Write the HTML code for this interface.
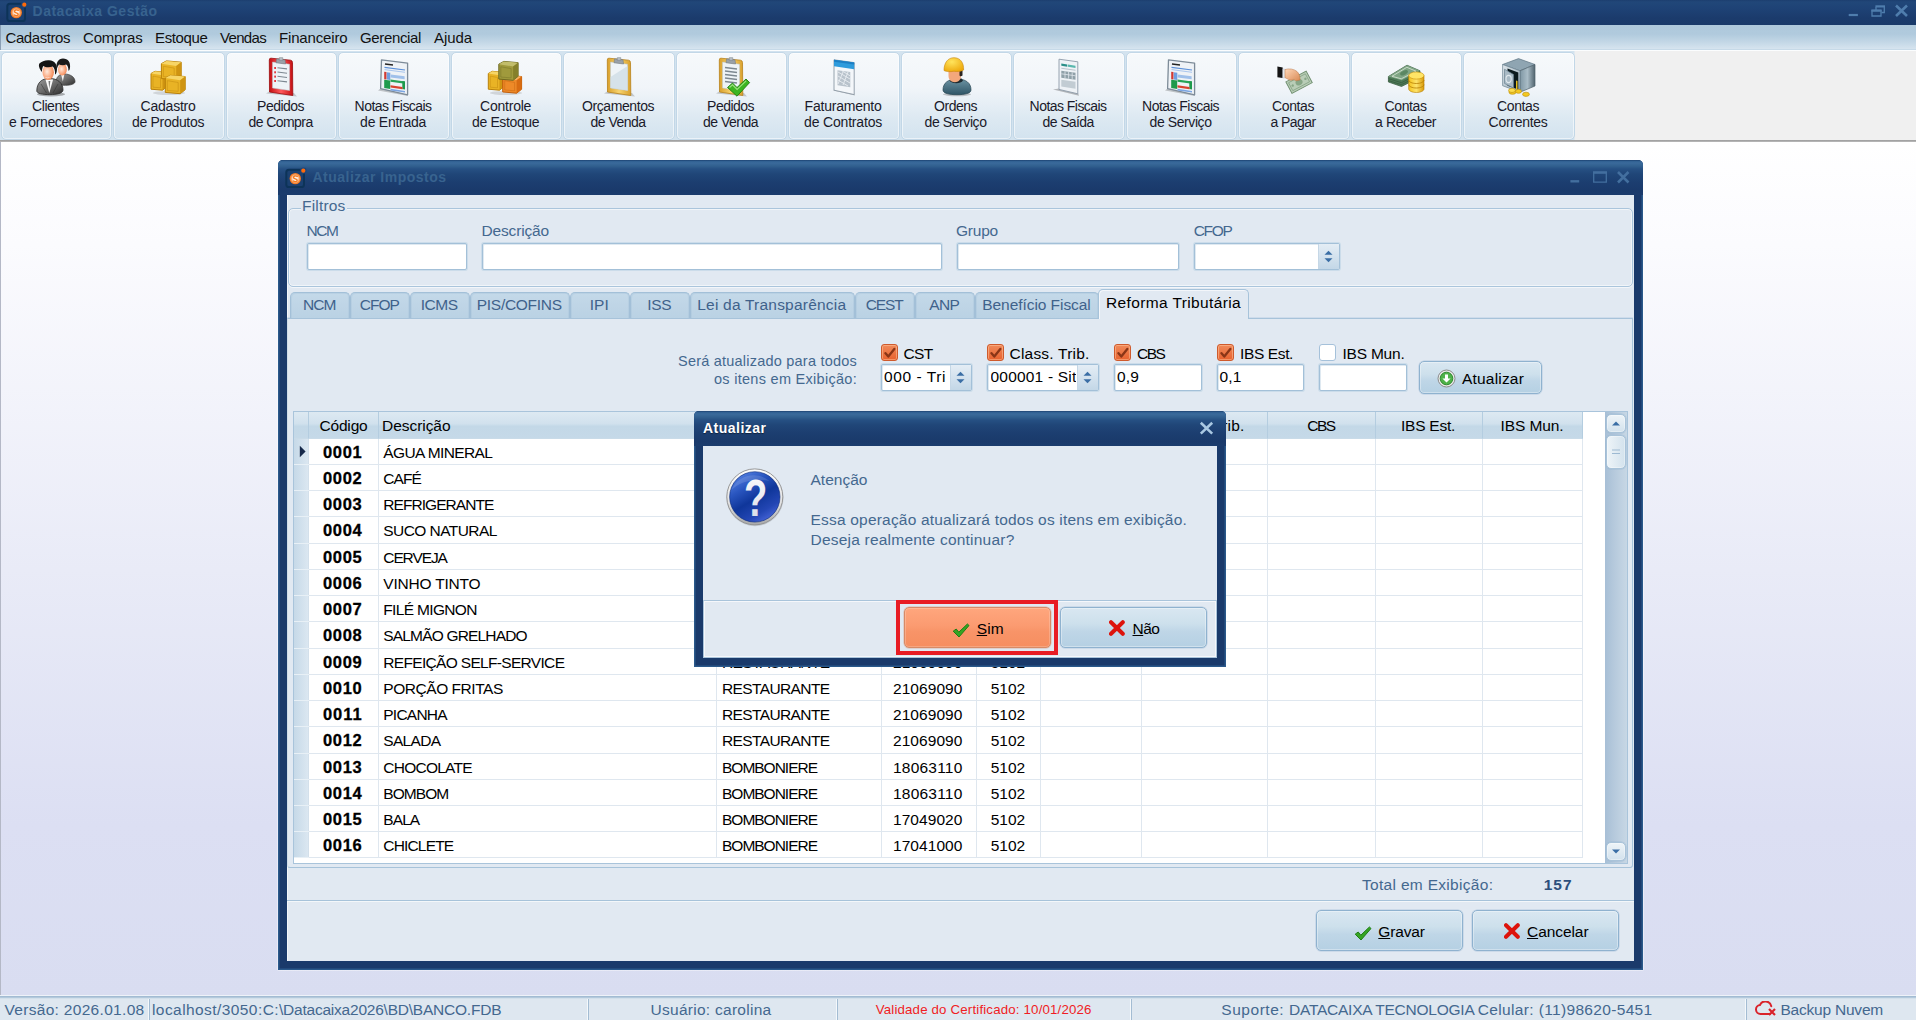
<!DOCTYPE html>
<html lang="pt-BR">
<head>
<meta charset="utf-8">
<title>Datacaixa Gestão - Atualizar Impostos</title>
<style>

*{box-sizing:border-box;margin:0;padding:0}
html,body{width:1916px;height:1020px;overflow:hidden}
body{position:relative;font-family:"Liberation Sans","DejaVu Sans",sans-serif;font-size:15px;color:#000;background:#fff}
div,span,svg,header,nav,main,section,footer,label,h1,h2,p{position:absolute}
h1,h2,p{font-weight:inherit;font-size:inherit}
.t{white-space:pre}
.w{left:0;top:0}
u{text-decoration:underline;text-underline-offset:1px}
#titlebar{left:0;top:0;width:1916px;height:25px;background:linear-gradient(#1c3e6f 0,#214779 2px,#1e4275 9px,#1b3b6c 18px,#1a3a6a 25px)}
#menubar{left:0;top:25px;width:1916px;height:25px;background:linear-gradient(#afc9dc 0,#b0cadd 9px,#c3d7e6 17px,#d5e3ee 23.5px,#c0d5e5 25px);border-left:1px solid #8a9fb5}
#toolbar{left:0;top:50px;width:1916px;height:90px;background:linear-gradient(90deg,#d3e3ef 0,#d3e3ef 1574px,#f0f0f0 1575px);border-top:1px solid #fbfdfe}
#tbline{left:0;top:140px;width:1916px;height:2px;background:linear-gradient(#9a9a9a,#bdbdbd)}
.tb{width:111.5px;height:88px;border:1px solid #c2d7e7;border-radius:5px;background:linear-gradient(#f6f9fb 0,#f1f5f9 40%,#dde9f2 75%,#d3e3ef 100%);box-shadow:inset 0 0 0 1px rgba(255,255,255,.55)}
#mdi{left:0;top:142px;width:1916px;height:854px;background:linear-gradient(#ffffff 0,#fbfbfe 12%,#e9ebf7 50%,#dcdff3 80%,#d9ddf1 100%);border-left:1px solid #b4b8c6}
#status{left:0;top:995px;width:1916px;height:25px;background:#dee7f0;border-top:1px solid #eef2f9;box-shadow:inset 0 1px 0 #a3bcd3,inset 0 2px 0 #b3c9dc,inset 0 3px 0 #d3e0eb}
.sep{width:2px;height:22px;border-left:1px solid #f4f8fb;border-right:1px solid #a3bcd3}
#win{width:1365px;height:810px;background:#1a3a6b;border-radius:5px 5px 1px 1px;box-shadow:inset 1.5px 0 0 #2a598b,inset -1.5px 0 0 #2a598b,inset 0 -1.5px 0 #2a598b,0 0 0 1px rgba(255,255,255,.4)}
#wintitle{left:0;top:0;width:1365px;height:35px;border-radius:5px 5px 0 0;background:linear-gradient(#173a68 0,#2f5f91 1px,#3a6a9b 3px,#31608f 6px,#265083 9px,#204678 14px,#1c3e70 22px,#1a3a6b 30px,#1b3c6d 35px)}
#winbody{left:9px;top:35px;width:1347px;height:766px;background:#e1e9f2;box-shadow:inset 1px 0 0 #f3f6fa}
.inp{background:#fff;border:1px solid #a3c0d8;border-radius:2px;box-shadow:0 0 0 1px rgba(186,209,228,.55),inset 1px 1px 0 rgba(163,192,216,.35)}
.grp{border:1px solid #aac5dc;border-radius:5px;box-shadow:inset 0 0 0 1px rgba(255,255,255,.55),0 1px 0 rgba(255,255,255,.6)}
.tab{height:26.5px;border:1px solid #a3c0d8;border-bottom:none;border-radius:5px 5px 0 0;background:linear-gradient(#c4d9e9 0,#bfd5e6 50%,#bad2e4 100%);box-shadow:inset 1px 1px 0 rgba(166,195,218,.35),inset -1px 0 0 rgba(166,195,218,.35)}
.tabsel{height:30px;border:1px solid #a7c3da;border-bottom:none;border-radius:5px 5px 0 0;background:#e1e9f2;box-shadow:inset 1px 1px 0 rgba(255,255,255,.6)}
.page{border:1px solid #a7c3da;border-left-color:#cfdde9;border-radius:0 0 3px 3px;box-shadow:0 -.5px 0 rgba(167,195,218,.6)}
.btn{border:1px solid #8fb2cf;border-radius:5px;background:linear-gradient(#d9e7f1 0,#cde0ec 40%,#bfd6e7 60%,#b5d0e3 100%);box-shadow:inset 0 0 0 1px rgba(255,255,255,.35),0 0 0 .5px rgba(143,178,207,.5)}
.btnhot{border:1px solid #d88a66;border-radius:5px;background:linear-gradient(#ffa67d 0,#fb9b71 45%,#f89468 60%,#f68e60 100%);box-shadow:inset 0 0 0 1px rgba(255,255,255,.2),0 0 0 .5px rgba(216,138,102,.5)}
.sbb{border-color:#a9c3d9;background:linear-gradient(#eef4f8,#d3e2ed)}
.sbt{border-color:#a9c3d9;background:linear-gradient(90deg,#eef4f8,#d3e2ed)}
.chk{width:17px;height:17px;border-radius:3px}
.chk.on{background:linear-gradient(#f08a5a,#e8622f);border:1px solid #cf5a2c;box-shadow:inset 0 0 0 1px rgba(255,200,160,.5)}
.chk.off{background:#fff;border:1px solid #a5c1da}
.spin{background:linear-gradient(#e4edf5,#c3d7e7);border-left:1px solid #c5d7e6}
#grid{width:1335px;height:453px;border:1px solid #a9c4db;background:#fff}
.gh{height:27px;background:linear-gradient(#dde9f2 0,#d1e1ed 45%,#c3d8e7 55%,#c5d9e8 100%);border-right:1px solid #b4cde0;border-bottom:1px solid #c9dbe8}
.ind{width:15px;height:419px;background:linear-gradient(90deg,#c6d9e8,#dbe7f1);border-right:1px solid #d3e0eb}
.hl{width:1274px;height:1px;background:#dfe7ef}
.hi{width:15px;height:1px;background:#e8f0f6}
.vl{width:1px;height:419px;background:#dfe7ef}
.sbtrack{width:22px;height:451px;background:linear-gradient(90deg,#a7bfd6 0,#b5c9dc 40%,#c7d7e5 100%)}
.rule{height:2px;border-top:1px solid #a7c3da;border-bottom:1px solid #f3f7fa}
#dlg{width:532px;height:256px;background:#1a3a6b;border-radius:5px 5px 1px 1px;box-shadow:inset 1.5px 0 0 #2a598b,inset -1.5px 0 0 #2a598b,inset 0 -1.5px 0 #2a598b}
#dlgtitle{left:0;top:0;width:532px;height:35px;border-radius:5px 5px 0 0;background:linear-gradient(#173a68 0,#2f5f91 1px,#3a6a9b 3px,#31608f 6px,#265083 9px,#204678 14px,#1c3e70 22px,#1a3a6b 30px,#1b3c6d 35px)}
#dlgbody{left:9px;top:35px;width:514px;height:212px;background:#e1e9f2}
#dlgfoot{border:1px solid #a9c4db;box-shadow:inset 0 0 0 1px rgba(255,255,255,.65);background:#e1e9f2}
#focus{border:4px solid #e81c24}

</style>
</head>
<body>
<header id="titlebar">
<svg style="left:5px;top:1px" width="24" height="23" viewBox="0 0 24 23"><defs><radialGradient id="ob1" cx="50%" cy="50%" r="50%"><stop offset="0" stop-color="#fff"/><stop offset=".45" stop-color="#fde3cf"/><stop offset=".8" stop-color="#f58a3c"/><stop offset="1" stop-color="#ef6d15"/></radialGradient></defs><rect x="2.3" y="2.8" width="17.7" height="17.2" rx="2.6" fill="#1b4070" stroke="#0d3358" stroke-width="2"/><circle cx="19.4" cy="3.6" r="3.2" fill="#1f4577"/><circle cx="11.3" cy="11.6" r="5.7" fill="url(#ob1)"/><path d="M13.3 9.4c-1.6-1-3.8-.4-3.8 1 0 1.700 3.7 1 3.7 2.8 0 1.400-2.3 1.900-3.9.8" fill="none" stroke="#f47b20" stroke-width="1.3" stroke-linecap="round"/><circle cx="19.3" cy="3.7" r="2.1" fill="#ff6a0a"/></svg>
<h1 class="t" style="left:32.50px;top:3px;line-height:16px;height:16px;font-size:14px;font-weight:700;color:#38638f;letter-spacing:0.517px;">Datacaixa Gestão</h1>
<svg style="left:1845px;top:3px" width="68" height="18" viewBox="0 0 68 18" fill="none" stroke="#4f7dad"><path d="M3.7 12h9.2" stroke-width="2.2"/><path d="M39.3 3v6.5h-2.8M31 4v3" stroke-width="1.3"/><path d="M30.4 3.4h9.6" stroke-width="2.2"/><path d="M27 7.5h9v5.5h-9z" stroke-width="1.3"/><path d="M26.4 7.6h10.2" stroke-width="2.2"/><path d="M51 2.5l11 10.5M62 2.5l-11 10.5" stroke-width="2.6"/></svg>
</header>
<nav id="menubar" aria-label="Menu principal">
<span class="t" role="menuitem" style="left:4.50px;top:4px;line-height:17px;height:17px;font-size:15px;color:#111;letter-spacing:-0.431px;">Cadastros</span>
<span class="t" role="menuitem" style="left:82.00px;top:4px;line-height:17px;height:17px;font-size:15px;color:#111;letter-spacing:-0.194px;">Compras</span>
<span class="t" role="menuitem" style="left:154.00px;top:4px;line-height:17px;height:17px;font-size:15px;color:#111;letter-spacing:-0.364px;">Estoque</span>
<span class="t" role="menuitem" style="left:219.00px;top:4px;line-height:17px;height:17px;font-size:15px;color:#111;letter-spacing:-0.674px;">Vendas</span>
<span class="t" role="menuitem" style="left:278.00px;top:4px;line-height:17px;height:17px;font-size:15px;color:#111;letter-spacing:-0.155px;">Financeiro</span>
<span class="t" role="menuitem" style="left:359.00px;top:4px;line-height:17px;height:17px;font-size:15px;color:#111;letter-spacing:-0.356px;">Gerencial</span>
<span class="t" role="menuitem" style="left:433.00px;top:4px;line-height:17px;height:17px;font-size:15px;color:#111;letter-spacing:-0.075px;">Ajuda</span>
</nav>
<div id="toolbar" role="toolbar">
<div class="tb" role="button" style="left:0.5px;top:0.5px;">
<svg style="left:34.7px;top:4.5px" width="40" height="40" viewBox="0 0 40 40"><defs><linearGradient id="su0" x1="0" y1="0" x2="1" y2="1"><stop offset="0" stop-color="#9a9a9a"/><stop offset=".5" stop-color="#6a6a6a"/><stop offset="1" stop-color="#2e2e2e"/></linearGradient>
<radialGradient id="sk0" cx="40%" cy="45%" r="70%"><stop offset="0" stop-color="#ffe9dc"/><stop offset=".6" stop-color="#f9a57c"/><stop offset="1" stop-color="#e8743f"/></radialGradient></defs>
<ellipse cx="15" cy="37.300" rx="14" ry="2.200" fill="#000" opacity=".3"/>
<path d="M20 26c0-6 3-9 8.500-9s10.500 3 10.500 7.500c0 2.600-4.500 3.800-9.500 3.800S20 27.800 20 26z" fill="url(#su0)" stroke="#3a3a3a" stroke-width=".7"/>
<path d="M25.300 18l1.500 6.500 1.400-6.500z" fill="#f4f4f4"/>
<ellipse cx="26.400" cy="12.600" rx="4.400" ry="6" fill="url(#sk0)"/>
<path d="M20.800 12c-1.400-6 1.600-10.600 6.200-10.600 5 0 8.200 4 6.800 10.600-.3 1-.8 1.600-1.400 1.800.2-2.800-.6-5-2.200-6.200-2.500 1-5.400.7-7.200-.2-1 1.300-1.600 2.800-2.200 4.600z" fill="#1a1a1a"/>
<path d="M.800 34c0-8 4.600-12.600 12.700-12.600S27 26 27 33c0 3.300-6 4.600-13.200 4.600S.800 36.500.800 34z" fill="url(#su0)" stroke="#2a2a2a" stroke-width=".8"/>
<path d="M9.500 22.600l3.800 13.400 3.800-13.400z" fill="#fafafa"/><path d="M12.500 24l.8 8 1-8z" fill="#777"/>
<path d="M5 27l5.500 9M22 27l-5 9" stroke="#2e2e2e" stroke-width=".8" opacity=".6"/>
<ellipse cx="12.200" cy="15.300" rx="5.700" ry="7.800" fill="url(#sk0)"/>
<path d="M8.500 19.500c1.600 1.600 5 1.600 6.600 0-1.200 2.200-5.400 2.200-6.600 0z" fill="#fff"/>
<path d="M5.800 15c-2.400-3-3.600-6.500-2.400-8.400C5.500 4.200 9 3 13 3.200c6 .3 9.400 5 7.600 11.800-.4 1.600-1 2.400-1.600 2.600.3-3.600-.5-6.600-2.400-8-3.200 1.200-7 .9-9.400-.5-.8 1.600-1.200 3.600-1.400 5.900z" fill="#141414"/></svg>
<span class="t" style="left:30.60px;top:45.5px;line-height:16px;height:16px;font-size:14px;color:#1a1a2a;letter-spacing:-0.449px;">Clientes</span>
<span class="t" style="left:7.60px;top:61.5px;line-height:16px;height:16px;font-size:14px;color:#1a1a2a;letter-spacing:-0.362px;">e Fornecedores</span>
</div>
<div class="tb" role="button" style="left:113px;top:0.5px;">
<svg style="left:34.7px;top:4.5px" width="40" height="40" viewBox="0 0 40 40"><ellipse cx="20" cy="36" rx="16" ry="2" fill="#000" opacity=".12"/><path d="M2 16.5L6 14.3L17.5 15.3L17.5 30.000000000000004L13.5 33.2L2 32.2Z" fill="#e9b325" stroke="#b98009" stroke-width="1" stroke-linejoin="round"/><path d="M2 16.5L6 14.3L17.5 15.3L13.5 18.3Z" fill="#f7d566"/><path d="M13.5 18.3L17.5 15.3L17.5 30.000000000000004L13.5 33.2Z" fill="#cf9412"/><path d="M4 19.1L11.5 20.5L11.5 30.800000000000004L4 30.200000000000003Z" fill="none" stroke="#b98009" stroke-opacity=".45" stroke-width=".9"/><path d="M12.4 6.65L17.4 3.9L32.2 5.15L32.2 18.8L27.200000000000003 22.8L12.4 21.55Z" fill="#e9b325" stroke="#b98009" stroke-width="1" stroke-linejoin="round"/><path d="M12.4 6.65L17.4 3.9L32.2 5.15L27.200000000000003 8.9Z" fill="#f7d566"/><path d="M27.200000000000003 8.9L32.2 5.15L32.2 18.8L27.200000000000003 22.8Z" fill="#cf9412"/><path d="M14.4 9.25L25.200000000000003 11.100000000000001L25.200000000000003 20.400000000000002L14.4 19.55Z" fill="none" stroke="#b98009" stroke-opacity=".45" stroke-width=".9"/><path d="M16.3 21.05L21.3 18.3L36.2 19.55L36.2 32.7L31.200000000000003 36.7L16.3 35.45Z" fill="#e9b325" stroke="#b98009" stroke-width="1" stroke-linejoin="round"/><path d="M16.3 21.05L21.3 18.3L36.2 19.55L31.200000000000003 23.3Z" fill="#f7d566"/><path d="M31.200000000000003 23.3L36.2 19.55L36.2 32.7L31.200000000000003 36.7Z" fill="#cf9412"/><path d="M18.3 23.650000000000002L29.200000000000003 25.5L29.200000000000003 34.300000000000004L18.3 33.45Z" fill="none" stroke="#b98009" stroke-opacity=".45" stroke-width=".9"/></svg>
<span class="t" style="left:26.60px;top:45.5px;line-height:16px;height:16px;font-size:14px;color:#1a1a2a;letter-spacing:-0.227px;">Cadastro</span>
<span class="t" style="left:18.10px;top:61.5px;line-height:16px;height:16px;font-size:14px;color:#1a1a2a;letter-spacing:-0.318px;">de Produtos</span>
</div>
<div class="tb" role="button" style="left:225.5px;top:0.5px;">
<svg style="left:34.7px;top:4.5px" width="40" height="40" viewBox="0 0 40 40"><path d="M5 36.500L36 39.500 33 36 9 34z" fill="#000" opacity=".18"/><defs><linearGradient id="cbred2" x1="0" y1="0" x2="1" y2="0"><stop offset="0" stop-color="#c40f12"/><stop offset=".5" stop-color="#ff5a5c"/><stop offset="1" stop-color="#c40f12"/></linearGradient></defs><path d="M10 1.200L29.500 3.200q2 .3 2 2.300L31.800 38.500 8.500 35 8.300 3q0-2 1.700-1.800z" fill="url(#cbred2)" stroke="#9c0a0c" stroke-width=".8"/><path d="M11.500 5L28.600 7.200 28.600 33.500 11.500 31z" fill="#eef3f7" stroke="#b9c4cc" stroke-width=".5"/><path d="M15.500 1.800l8.500 1 .6 4.200-9.600-1.200z" fill="#9aa1a8" stroke="#6d747b" stroke-width=".5"/><path d="M18.300 .6h3.500v2.800h-3.500z" fill="#b8bec4" stroke="#6d747b" stroke-width=".4"/><rect x="13.300" y="10" width="1.600" height="2" fill="#e0242a"/><path d="M16.500 10.7l9.500 1.200" stroke="#7c8790" stroke-width="1.100"/><rect x="13.300" y="14.3" width="1.600" height="2" fill="#e0242a"/><path d="M16.500 15.0l9.500 1.200" stroke="#7c8790" stroke-width="1.100"/><rect x="13.300" y="18.6" width="1.600" height="2" fill="#e0242a"/><path d="M16.500 19.3l9.500 1.200" stroke="#7c8790" stroke-width="1.100"/><rect x="13.300" y="23" width="1.600" height="2" fill="#e0242a"/><path d="M16.500 23.7l9.500 1.200" stroke="#7c8790" stroke-width="1.100"/></svg>
<span class="t" style="left:30.60px;top:45.5px;line-height:16px;height:16px;font-size:14px;color:#1a1a2a;letter-spacing:-0.513px;">Pedidos</span>
<span class="t" style="left:22.10px;top:61.5px;line-height:16px;height:16px;font-size:14px;color:#1a1a2a;letter-spacing:-0.585px;">de Compra</span>
</div>
<div class="tb" role="button" style="left:338px;top:0.5px;">
<svg style="left:34.7px;top:4.5px" width="40" height="40" viewBox="0 0 40 40"><path d="M4 33.500L34 39 33 36 7 31z" fill="#000" opacity=".2"/>
<path d="M7.500 2.800L33.600 6.200 33.600 37.800 6.600 31.600z" fill="#eef2f6" stroke="#7d8b98" stroke-width="1.300" stroke-linejoin="round"/>
<path d="M11 7l8 1" stroke="#222" stroke-width="1.300"/>
<path d="M10.500 10.300l20.500 2.700" stroke="#5b8fd8" stroke-width="1.200"/><path d="M10.500 12.600l20.500 2.700" stroke="#a9c6ee" stroke-width="1"/>
<path d="M10.200 14.800l2.300.3v7.500l-2.300-.3z" fill="#d23a32"/>
<path d="M12.800 15.200l3.500.5v7.300l-3.500-.5z" fill="#6e9ee0"/>
<path d="M16.600 17.500l14 1.800v3l-14-1.800z" fill="#9fc0ea"/>
<path d="M10.200 22.800l6 .8v8.300l-6-1z" fill="#1f9a4c"/>
<path d="M16.500 22.500l14.500 2v2.200l-14.500-2z" fill="#27a356"/><path d="M28.300 24l2.700.4v8l-2.700-.4z" fill="#1f9a4c"/>
<path d="M16.500 28.300l12 1.700v2.300l-12-1.700z" fill="#d8432f"/>
<path d="M16.500 31.800l14.500 2.200v1.600l-14.500-2.200z" fill="#7ba5e2"/></svg>
<span class="t" style="left:15.60px;top:45.5px;line-height:16px;height:16px;font-size:14px;color:#1a1a2a;letter-spacing:-0.541px;">Notas Fiscais</span>
<span class="t" style="left:21.10px;top:61.5px;line-height:16px;height:16px;font-size:14px;color:#1a1a2a;letter-spacing:-0.250px;">de Entrada</span>
</div>
<div class="tb" role="button" style="left:450.5px;top:0.5px;">
<svg style="left:34.7px;top:4.5px" width="40" height="40" viewBox="0 0 40 40"><ellipse cx="20" cy="36" rx="16" ry="2" fill="#000" opacity=".12"/><path d="M2.3 16.5L6.3 14.3L17.5 15.3L17.5 30.000000000000004L13.5 33.2L2.3 32.2Z" fill="#e9b325" stroke="#b98009" stroke-width="1" stroke-linejoin="round"/><path d="M2.3 16.5L6.3 14.3L17.5 15.3L13.5 18.3Z" fill="#f7d566"/><path d="M13.5 18.3L17.5 15.3L17.5 30.000000000000004L13.5 33.2Z" fill="#cf9412"/><path d="M4.3 19.1L11.5 20.5L11.5 30.800000000000004L4.3 30.200000000000003Z" fill="none" stroke="#b98009" stroke-opacity=".45" stroke-width=".9"/><path d="M16.7 21.05L21.7 18.3L35.6 19.55L35.6 32.2L30.6 36.2L16.7 34.95Z" fill="#ee8a28" stroke="#c05e0c" stroke-width="1" stroke-linejoin="round"/><path d="M16.7 21.05L21.7 18.3L35.6 19.55L30.6 23.3Z" fill="#f8b060"/><path d="M30.6 23.3L35.6 19.55L35.6 32.2L30.6 36.2Z" fill="#d86c12"/><path d="M18.7 23.650000000000002L28.6 25.5L28.6 33.800000000000004L18.7 32.95Z" fill="none" stroke="#c05e0c" stroke-opacity=".45" stroke-width=".9"/><path d="M12.8 7.15L17.8 4.4L32.1 5.65L32.1 19.3L27.1 23.3L12.8 22.05Z" fill="#a09a3c" stroke="#6e6a22" stroke-width="1" stroke-linejoin="round"/><path d="M12.8 7.15L17.8 4.4L32.1 5.65L27.1 9.4Z" fill="#c2bd6a"/><path d="M27.1 9.4L32.1 5.65L32.1 19.3L27.1 23.3Z" fill="#85802a"/><path d="M14.8 9.75L25.1 11.600000000000001L25.1 20.900000000000002L14.8 20.05Z" fill="none" stroke="#6e6a22" stroke-opacity=".45" stroke-width=".9"/></svg>
<span class="t" style="left:28.60px;top:45.5px;line-height:16px;height:16px;font-size:14px;color:#1a1a2a;letter-spacing:-0.240px;">Controle</span>
<span class="t" style="left:20.60px;top:61.5px;line-height:16px;height:16px;font-size:14px;color:#1a1a2a;letter-spacing:-0.384px;">de Estoque</span>
</div>
<div class="tb" role="button" style="left:563px;top:0.5px;">
<svg style="left:34.7px;top:4.5px" width="40" height="40" viewBox="0 0 40 40"><path d="M5 36.500L36 39.500 33 36 9 34z" fill="#000" opacity=".18"/><defs><linearGradient id="cbtan5" x1="0" y1="0" x2="1" y2="0"><stop offset="0" stop-color="#d9a02c"/><stop offset=".5" stop-color="#f7d36f"/><stop offset="1" stop-color="#d9a02c"/></linearGradient></defs><path d="M10 1.200L29.500 3.200q2 .3 2 2.300L31.800 38.500 8.500 35 8.300 3q0-2 1.700-1.800z" fill="url(#cbtan5)" stroke="#b8821a" stroke-width=".8"/><path d="M11.500 5L28.600 7.200 28.600 33.500 11.500 31z" fill="#eef3f7" stroke="#b9c4cc" stroke-width=".5"/><path d="M15.500 1.800l8.500 1 .6 4.200-9.600-1.200z" fill="#9aa1a8" stroke="#6d747b" stroke-width=".5"/><path d="M18.300 .6h3.500v2.800h-3.500z" fill="#b8bec4" stroke="#6d747b" stroke-width=".4"/><path d="M11.500 20L28.600 9v24.500L11.500 31z" fill="#cfdde6" opacity=".8"/></svg>
<span class="t" style="left:18.10px;top:45.5px;line-height:16px;height:16px;font-size:14px;color:#1a1a2a;letter-spacing:-0.425px;">Orçamentos</span>
<span class="t" style="left:26.60px;top:61.5px;line-height:16px;height:16px;font-size:14px;color:#1a1a2a;letter-spacing:-0.521px;">de Venda</span>
</div>
<div class="tb" role="button" style="left:675.5px;top:0.5px;">
<svg style="left:34.7px;top:4.5px" width="40" height="40" viewBox="0 0 40 40"><path d="M5 36.500L36 39.500 33 36 9 34z" fill="#000" opacity=".18"/><defs><linearGradient id="cbtan26" x1="0" y1="0" x2="1" y2="0"><stop offset="0" stop-color="#d9a02c"/><stop offset=".5" stop-color="#f7d36f"/><stop offset="1" stop-color="#d9a02c"/></linearGradient></defs><path d="M10 1.200L29.500 3.200q2 .3 2 2.300L31.800 38.500 8.500 35 8.300 3q0-2 1.700-1.800z" fill="url(#cbtan26)" stroke="#b8821a" stroke-width=".8"/><path d="M11.500 5L28.600 7.200 28.600 33.500 11.500 31z" fill="#eef3f7" stroke="#b9c4cc" stroke-width=".5"/><path d="M15.500 1.800l8.500 1 .6 4.200-9.600-1.200z" fill="#9aa1a8" stroke="#6d747b" stroke-width=".5"/><path d="M18.300 .6h3.500v2.800h-3.500z" fill="#b8bec4" stroke="#6d747b" stroke-width=".4"/><path d="M14 10.5l12 1.500" stroke="#7c8790" stroke-width="1.300"/><path d="M14 14l12 1.500" stroke="#7c8790" stroke-width="1.300"/><path d="M14 17.5l12 1.500" stroke="#7c8790" stroke-width="1.300"/><path d="M14 21l12 1.500" stroke="#7c8790" stroke-width="1.300"/><path d="M14 24.5l12 1.500" stroke="#7c8790" stroke-width="1.300"/><path d="M16.500 30.500l5-4.500 4.500 4.500L35 22l3.600 3.600L26 39.200z" fill="#3cb521" stroke="#1f7d10" stroke-width=".9" stroke-linejoin="round"/><path d="M18.500 30.500l3-2.600 4.600 4.600 9-8.600" fill="none" stroke="#9be07e" stroke-width="1.200"/></svg>
<span class="t" style="left:30.60px;top:45.5px;line-height:16px;height:16px;font-size:14px;color:#1a1a2a;letter-spacing:-0.513px;">Pedidos</span>
<span class="t" style="left:26.60px;top:61.5px;line-height:16px;height:16px;font-size:14px;color:#1a1a2a;letter-spacing:-0.521px;">de Venda</span>
</div>
<div class="tb" role="button" style="left:788px;top:0.5px;">
<svg style="left:34.7px;top:4.5px" width="40" height="40" viewBox="0 0 40 40"><path d="M9 33.500L31 38.500 30 36 11 32z" fill="#000" opacity=".22"/>
<path d="M10 2.800L30.200 5.600 30.200 37.600 10 33.200z" fill="#f4f7fa" stroke="#8b98a5" stroke-width=".9" stroke-linejoin="round"/>
<path d="M10 2.800L30.200 5.600 30.200 12.300 10 9.200z" fill="#2e9bdc"/><path d="M10 2.800L30.200 5.600 30.200 7.600 10 4.800z" fill="#1d7fc4"/>
<path d="M13.500 13.200l12.800 1.800v15.200l-12.800-2z" fill="#b9c3cc"/>
<path d="M14 15l12 7M14 19l12 7M14 23l10 6M18 13.800l8 5M14 27l5-12M19 28l5-13" stroke="#f4f7fa" stroke-width=".9" opacity=".8"/></svg>
<span class="t" style="left:15.60px;top:45.5px;line-height:16px;height:16px;font-size:14px;color:#1a1a2a;letter-spacing:-0.216px;">Faturamento</span>
<span class="t" style="left:15.10px;top:61.5px;line-height:16px;height:16px;font-size:14px;color:#1a1a2a;letter-spacing:-0.181px;">de Contratos</span>
</div>
<div class="tb" role="button" style="left:900.5px;top:0.5px;">
<svg style="left:34.7px;top:4.5px" width="40" height="40" viewBox="0 0 40 40"><defs><radialGradient id="hh8" cx="40%" cy="30%" r="75%"><stop offset="0" stop-color="#ffe45c"/><stop offset="1" stop-color="#eda80c"/></radialGradient>
<linearGradient id="wb8" x1="0" y1="0" x2="0" y2="1"><stop offset="0" stop-color="#6d94a4"/><stop offset="1" stop-color="#2f5566"/></linearGradient></defs>
<ellipse cx="21" cy="37.300" rx="14" ry="2" fill="#000" opacity=".2"/>
<path d="M7 33c0-7 5-11 14-11s14 4 14 11c0 3.300-6 4.700-14 4.700S7 36.300 7 33z" fill="url(#wb8)" stroke="#264552" stroke-width=".7"/>
<path d="M13.500 23.500c2 3.500 11.500 3.500 13.500 0l-1.500-2h-10z" fill="#1f2a30"/>
<path d="M12.500 13h12.500v6c0 3.500-2.700 6.200-6.200 6.200s-6.300-2.700-6.300-6.200z" fill="#f3a77c"/>
<path d="M23.500 13.500h3v5c-1 .8-2 1.400-3 0z" fill="#2a2420"/>
<path d="M8 13.500c0-8 4-12.800 10-12.800 6.300 0 10 5 9.600 12.300-3 1.700-7 1.700-9.600 1.200-4 .8-7.600.6-10-.7z" fill="url(#hh8)" stroke="#c8860a" stroke-width=".6"/></svg>
<span class="t" style="left:32.60px;top:45.5px;line-height:16px;height:16px;font-size:14px;color:#1a1a2a;letter-spacing:-0.487px;">Ordens</span>
<span class="t" style="left:23.10px;top:61.5px;line-height:16px;height:16px;font-size:14px;color:#1a1a2a;letter-spacing:-0.416px;">de Serviço</span>
</div>
<div class="tb" role="button" style="left:1013px;top:0.5px;">
<svg style="left:34.7px;top:4.5px" width="40" height="40" viewBox="0 0 40 40"><path d="M4 32.500L30 38.800 29 36 10 31.500z" fill="#000" opacity=".25"/>
<path d="M10 2.200L28.800 4.800 28.800 36.800 10 32.400z" fill="#eef2f6" stroke="#8c9aa8" stroke-width=".9" stroke-linejoin="round"/>
<path d="M12.300 6.600l6 .9v2.200l-6-.9z" fill="#2a8f88"/><path d="M19 7.600l7.500 1.100v2.200L19 9.800z" fill="#59b7ad"/>
<path d="M12.300 10.800l14.200 2v1l-14.200-2z" fill="#b9c3cc"/>
<path d="M12.300 13.800l14.200 2v7l-14.200-2z" fill="#8fa0a8"/><path d="M12.300 16.800l14.200 2" stroke="#dfe6ec" stroke-width=".8"/><path d="M16 14.400v6.800M19.600 14.900v6.800M23.200 15.400v6.800" stroke="#dfe6ec" stroke-width=".8"/>
<path d="M12.300 22.800l14.200 2v7l-14.200-2.400z" fill="#c2ccd3"/></svg>
<span class="t" style="left:15.60px;top:45.5px;line-height:16px;height:16px;font-size:14px;color:#1a1a2a;letter-spacing:-0.541px;">Notas Fiscais</span>
<span class="t" style="left:28.60px;top:61.5px;line-height:16px;height:16px;font-size:14px;color:#1a1a2a;letter-spacing:-0.633px;">de Saída</span>
</div>
<div class="tb" role="button" style="left:1125.5px;top:0.5px;">
<svg style="left:34.7px;top:4.5px" width="40" height="40" viewBox="0 0 40 40"><path d="M4 33.500L34 39 33 36 7 31z" fill="#000" opacity=".2"/>
<path d="M7.500 2.800L33.600 6.200 33.600 37.800 6.600 31.600z" fill="#eef2f6" stroke="#7d8b98" stroke-width="1.300" stroke-linejoin="round"/>
<path d="M11 7l8 1" stroke="#222" stroke-width="1.300"/>
<path d="M10.500 10.300l20.500 2.700" stroke="#5b8fd8" stroke-width="1.200"/><path d="M10.500 12.600l20.500 2.700" stroke="#a9c6ee" stroke-width="1"/>
<path d="M10.200 14.800l2.300.3v7.500l-2.300-.3z" fill="#d23a32"/>
<path d="M12.800 15.200l3.500.5v7.300l-3.500-.5z" fill="#6e9ee0"/>
<path d="M16.600 17.500l14 1.800v3l-14-1.800z" fill="#9fc0ea"/>
<path d="M10.200 22.800l6 .8v8.300l-6-1z" fill="#1f9a4c"/>
<path d="M16.500 22.500l14.500 2v2.200l-14.500-2z" fill="#27a356"/><path d="M28.300 24l2.700.4v8l-2.700-.4z" fill="#1f9a4c"/>
<path d="M16.500 28.300l12 1.700v2.300l-12-1.700z" fill="#d8432f"/>
<path d="M16.500 31.800l14.500 2.200v1.600l-14.500-2.200z" fill="#7ba5e2"/></svg>
<span class="t" style="left:15.60px;top:45.5px;line-height:16px;height:16px;font-size:14px;color:#1a1a2a;letter-spacing:-0.541px;">Notas Fiscais</span>
<span class="t" style="left:23.10px;top:61.5px;line-height:16px;height:16px;font-size:14px;color:#1a1a2a;letter-spacing:-0.416px;">de Serviço</span>
</div>
<div class="tb" role="button" style="left:1238px;top:0.5px;">
<svg style="left:34.7px;top:4.5px" width="40" height="40" viewBox="0 0 40 40"><defs><linearGradient id="hd11" x1="0" y1="0" x2="1" y2="1"><stop offset="0" stop-color="#ffd7b8"/><stop offset="1" stop-color="#d98a55"/></linearGradient></defs>
<g transform="rotate(-28 25.500 25)"><rect x="13.500" y="18.500" width="23" height="13" fill="#b9cdb7" stroke="#6f8f6f" stroke-width=".9"/><rect x="15.500" y="20.500" width="19" height="9" fill="none" stroke="#7f9f7f" stroke-width=".7"/><ellipse cx="25" cy="25" rx="3.600" ry="3" fill="#87a686"/><circle cx="17.800" cy="25" r="1.200" fill="#87a686"/><circle cx="32.200" cy="25" r="1.200" fill="#87a686"/></g>
<path d="M3.400 9.400l5.300 1v10.600l-5.300-.8z" fill="#141414"/><path d="M8.700 11.800l2.400.6v8.400l-2.400.2z" fill="#e9edf2" stroke="#99a" stroke-width=".3"/>
<path d="M11 12.500c4-1.200 9-.6 12 2 2 1.800 3.300 5 3 8.500l-2.500.6c-1.600.3-2.800-.2-3.600-1-2.400 1-5 .6-6.600-.8L11 20.600z" fill="url(#hd11)" stroke="#b8703f" stroke-width=".5"/></svg>
<span class="t" style="left:33.10px;top:45.5px;line-height:16px;height:16px;font-size:14px;color:#1a1a2a;letter-spacing:-0.393px;">Contas</span>
<span class="t" style="left:31.60px;top:61.5px;line-height:16px;height:16px;font-size:14px;color:#1a1a2a;letter-spacing:-0.578px;">a Pagar</span>
</div>
<div class="tb" role="button" style="left:1350.5px;top:0.5px;">
<svg style="left:34.7px;top:4.5px" width="40" height="40" viewBox="0 0 40 40"><defs><linearGradient id="cn12" x1="0" y1="0" x2="1" y2="0"><stop offset="0" stop-color="#f6c31c"/><stop offset=".5" stop-color="#fde36a"/><stop offset="1" stop-color="#d99a08"/></linearGradient></defs>
<path d="M2.400 19.500L21 8.200l13 5.600v6.500L15.500 29.500 2.400 25z" fill="#4d7a57" stroke="#35583c" stroke-width=".7" stroke-linejoin="round"/>
<path d="M2.400 19.500L21 8.200l13 5.600L15.500 23.200z" fill="#7fa584"/><path d="M6 19.300L20.800 10.300l9.200 3.900-14.700 7.600z" fill="none" stroke="#d8e6d6" stroke-width=".8"/><ellipse cx="18" cy="15.800" rx="4.200" ry="2.100" transform="rotate(-25 18 15.800)" fill="#5b8763"/>
<path d="M2.400 21.700l13.100 4 18.500-9.500M2.400 23.600l13.100 4L34 18.300" stroke="#2f5036" stroke-width=".6" fill="none"/>
<g><path d="M22.700 18.500h15.300v13.500c0 1.900-3.400 3.500-7.650 3.500s-7.650-1.600-7.650-3.500z" fill="url(#cn12)" stroke="#b57d05" stroke-width=".6"/>
<ellipse cx="30.350" cy="18.500" rx="7.650" ry="3.600" fill="#ffe566" stroke="#c98f08" stroke-width=".6"/>
<path d="M22.700 23c0 1.900 3.400 3.500 7.650 3.500s7.650-1.600 7.650-3.500M22.700 27.500c0 1.900 3.400 3.500 7.650 3.500s7.650-1.600 7.650-3.500" fill="none" stroke="#b57d05" stroke-width=".8"/></g></svg>
<span class="t" style="left:33.10px;top:45.5px;line-height:16px;height:16px;font-size:14px;color:#1a1a2a;letter-spacing:-0.393px;">Contas</span>
<span class="t" style="left:23.60px;top:61.5px;line-height:16px;height:16px;font-size:14px;color:#1a1a2a;letter-spacing:-0.399px;">a Receber</span>
</div>
<div class="tb" role="button" style="left:1463px;top:0.5px;">
<svg style="left:34.7px;top:4.5px" width="40" height="40" viewBox="0 0 40 40"><defs><linearGradient id="sf113" x1="0" y1="0" x2="1" y2="0"><stop offset="0" stop-color="#7f97a4"/><stop offset=".5" stop-color="#a9bcc6"/><stop offset="1" stop-color="#50636e"/></linearGradient>
<linearGradient id="sf213" x1="0" y1="0" x2="1" y2="1"><stop offset="0" stop-color="#dfe7ec"/><stop offset="1" stop-color="#93a7b3"/></linearGradient></defs>
<path d="M3.600 7.500L19.500 1.600 36 7.500 21 13.800z" fill="#8fa5b2" stroke="#5f7684" stroke-width=".7" stroke-linejoin="round"/>
<path d="M21 13.800L36 7.500v21.500L21 35.200z" fill="url(#sf113)" stroke="#51646f" stroke-width=".7" stroke-linejoin="round"/>
<path d="M3.600 7.500L21 13.800v21.400L3.600 28.700z" fill="url(#sf213)" stroke="#6b8291" stroke-width=".7" stroke-linejoin="round"/>
<path d="M8.500 11.500L19.300 15.500v17L8.500 28.700z" fill="#0c1a1e"/>
<path d="M5.500 12.200l9 5.300v13.500l-9-4.600z" fill="#a9bac5" stroke="#6b8291" stroke-width=".7"/>
<ellipse cx="9.600" cy="22" rx="2.600" ry="3.600" fill="none" stroke="#dfe7ec" stroke-width="1.100"/>
<path d="M17 23.500l1.500.5v8.500l-1.500-.5z" fill="#e9c01c"/>
<ellipse cx="13.500" cy="35" rx="3.600" ry="2.300" fill="#f4c81f" stroke="#b98c08" stroke-width=".6"/><ellipse cx="19.500" cy="34.300" rx="3" ry="2" fill="#f4c81f" stroke="#b98c08" stroke-width=".6"/>
<ellipse cx="27" cy="37.300" rx="3.400" ry="2.100" fill="#f4c81f" stroke="#b98c08" stroke-width=".6"/><ellipse cx="13" cy="33.400" rx="3.400" ry="2.100" fill="#fbdc4c" stroke="#b98c08" stroke-width=".6"/></svg>
<span class="t" style="left:33.10px;top:45.5px;line-height:16px;height:16px;font-size:14px;color:#1a1a2a;letter-spacing:-0.393px;">Contas</span>
<span class="t" style="left:24.60px;top:61.5px;line-height:16px;height:16px;font-size:14px;color:#1a1a2a;letter-spacing:-0.274px;">Correntes</span>
</div>
</div>
<div id="tbline"></div>
<main id="mdi">
<section id="win" aria-label="Atualizar Impostos" style="left:277px;top:18px;">
<div id="wintitle"></div><div id="winbody"></div>
<svg style="left:6.2px;top:7px" width="24" height="23" viewBox="0 0 24 23"><defs><radialGradient id="ob2" cx="50%" cy="50%" r="50%"><stop offset="0" stop-color="#fff"/><stop offset=".45" stop-color="#fde3cf"/><stop offset=".8" stop-color="#f58a3c"/><stop offset="1" stop-color="#ef6d15"/></radialGradient></defs><rect x="2.3" y="2.8" width="17.7" height="17.2" rx="2.6" fill="#1b4070" stroke="#0d3358" stroke-width="2"/><circle cx="19.4" cy="3.6" r="3.2" fill="#1f4577"/><circle cx="11.3" cy="11.6" r="5.7" fill="url(#ob2)"/><path d="M13.3 9.4c-1.6-1-3.8-.4-3.8 1 0 1.700 3.7 1 3.7 2.8 0 1.400-2.3 1.900-3.9.8" fill="none" stroke="#f47b20" stroke-width="1.3" stroke-linecap="round"/><circle cx="19.3" cy="3.7" r="2.1" fill="#ff6a0a"/></svg>
<h2 class="t" style="left:34.50px;top:9px;line-height:16px;height:16px;font-size:14px;font-weight:700;color:#38638f;letter-spacing:0.486px;">Atualizar Impostos</h2>
<svg style="left:1287px;top:8px" width="70" height="18" viewBox="0 0 70 18" fill="none" stroke="#436f9f"><path d="M5.4 13.3h8.8" stroke-width="2.4"/><path d="M28.7 4.2h12.6v10H28.7z" stroke-width="1.3"/><path d="M28 4.6h14" stroke-width="2.4"/><path d="M53 4l10.5 10.5M63.5 4l-10.5 10.5" stroke-width="2.6"/></svg>
<div class="grp" role="group" aria-label="Filtros" style="left:10px;top:48px;width:1345px;height:79px">
<div style="left:11.5px;top:-9px;width:46px;height:16px;background:#e1e9f2"></div>
<span class="t" style="left:13.00px;top:-12px;line-height:17px;height:17px;font-size:15.5px;color:#44688f;letter-spacing:0.185px;">Filtros</span>
<label class="t" style="left:17.50px;top:13px;line-height:17px;height:17px;font-size:15.5px;color:#44688f;letter-spacing:-1.438px;">NCM</label>
<div class="inp" style="left:18px;top:34px;width:160px;height:27px"></div>
<label class="t" style="left:192.50px;top:13px;line-height:17px;height:17px;font-size:15.5px;color:#44688f;letter-spacing:-0.158px;">Descrição</label>
<div class="inp" style="left:193px;top:34px;width:460px;height:27px"></div>
<label class="t" style="left:667.00px;top:13px;line-height:17px;height:17px;font-size:15.5px;color:#44688f;letter-spacing:-0.219px;">Grupo</label>
<div class="inp" style="left:668px;top:34px;width:222px;height:27px"></div>
<label class="t" style="left:904.70px;top:13px;line-height:17px;height:17px;font-size:15.5px;color:#44688f;letter-spacing:-1.266px;">CFOP</label>
<div class="inp" style="left:905px;top:34px;width:146px;height:27px"></div>
<div class="spin" style="left:1029px;top:35px;width:21px;height:25px"><svg style="left:4px;top:5px" width="11" height="15" viewBox="0 0 11 15"><path d="M1.5 5.8L5.5 1.8l4 4z" fill="#3a6ea5"/><path d="M1.5 9.2l4 4 4-4z" fill="#3a6ea5"/></svg></div>
</div>
<div class="page" style="left:9px;top:157.5px;width:1346px;height:550.5px"></div>
<div class="w" role="tablist">
<div class="tab" role="tab" style="left:11.5px;top:131.5px;width:60.0px">
<span class="t" style="left:12.50px;top:3.5px;line-height:17px;height:17px;font-size:15.5px;color:#3f628b;letter-spacing:-0.938px;">NCM</span>
</div>
<div class="tab" role="tab" style="left:71.5px;top:131.5px;width:60.0px">
<span class="t" style="left:9.25px;top:3.5px;line-height:17px;height:17px;font-size:15.5px;color:#3f628b;letter-spacing:-1.016px;">CFOP</span>
</div>
<div class="tab" role="tab" style="left:131.5px;top:131.5px;width:60.0px">
<span class="t" style="left:10.25px;top:3.5px;line-height:17px;height:17px;font-size:15.5px;color:#3f628b;letter-spacing:-0.438px;">ICMS</span>
</div>
<div class="tab" role="tab" style="left:191.5px;top:131.5px;width:100.0px">
<span class="t" style="left:6.25px;top:3.5px;line-height:17px;height:17px;font-size:15.5px;color:#3f628b;letter-spacing:-0.286px;">PIS/COFINS</span>
</div>
<div class="tab" role="tab" style="left:291.5px;top:131.5px;width:60.0px">
<span class="t" style="left:19.25px;top:3.5px;line-height:17px;height:17px;font-size:15.5px;color:#3f628b;letter-spacing:0.016px;">IPI</span>
</div>
<div class="tab" role="tab" style="left:351.5px;top:131.5px;width:60.0px">
<span class="t" style="left:16.75px;top:3.5px;line-height:17px;height:17px;font-size:15.5px;color:#3f628b;letter-spacing:-0.328px;">ISS</span>
</div>
<div class="tab" role="tab" style="left:411.5px;top:131.5px;width:165.0px">
<span class="t" style="left:6.75px;top:3.5px;line-height:17px;height:17px;font-size:15.5px;color:#3f628b;letter-spacing:0.212px;">Lei da Transparência</span>
</div>
<div class="tab" role="tab" style="left:576.5px;top:131.5px;width:60.0px">
<span class="t" style="left:10.25px;top:3.5px;line-height:17px;height:17px;font-size:15.5px;color:#3f628b;letter-spacing:-1.086px;">CEST</span>
</div>
<div class="tab" role="tab" style="left:636.5px;top:131.5px;width:60.0px">
<span class="t" style="left:13.75px;top:3.5px;line-height:17px;height:17px;font-size:15.5px;color:#3f628b;letter-spacing:-0.625px;">ANP</span>
</div>
<div class="tab" role="tab" style="left:696.5px;top:131.5px;width:124.5px">
<span class="t" style="left:6.75px;top:3.5px;line-height:17px;height:17px;font-size:15.5px;color:#3f628b;letter-spacing:-0.058px;">Benefício Fiscal</span>
</div>
<div class="tabsel" role="tab" aria-selected="true" style="left:820px;top:129px;width:151px">
<span class="t" style="left:7.00px;top:4px;line-height:17px;height:17px;font-size:15.5px;letter-spacing:0.369px;">Reforma Tributária</span>
</div>
</div>
<div class="w" role="tabpanel">
<span class="t" style="left:400.00px;top:193px;line-height:16px;height:16px;font-size:14.5px;color:#44688f;letter-spacing:0.218px;">Será atualizado para todos</span>
<span class="t" style="left:436.00px;top:211px;line-height:16px;height:16px;font-size:14.5px;color:#44688f;letter-spacing:0.285px;">os itens em Exibição:</span>
<div class="chk on" role="checkbox" aria-checked="true" style="left:603px;top:184px"><svg style="left:2px;top:2px" width="12" height="12" viewBox="0 0 12 12"><path d="M1.5 6.2l2.8 3.3L10.3 2" fill="none" stroke="#8a3516" stroke-width="2.3" stroke-linecap="round" stroke-linejoin="round"/></svg></div>
<label class="t" style="left:625.50px;top:185px;line-height:17px;height:17px;font-size:15.5px;letter-spacing:-0.667px;">CST</label>
<div class="chk on" role="checkbox" aria-checked="true" style="left:709px;top:184px"><svg style="left:2px;top:2px" width="12" height="12" viewBox="0 0 12 12"><path d="M1.5 6.2l2.8 3.3L10.3 2" fill="none" stroke="#8a3516" stroke-width="2.3" stroke-linecap="round" stroke-linejoin="round"/></svg></div>
<label class="t" style="left:731.50px;top:185px;line-height:17px;height:17px;font-size:15.5px;letter-spacing:0.207px;">Class. Trib.</label>
<div class="chk on" role="checkbox" aria-checked="true" style="left:836px;top:184px"><svg style="left:2px;top:2px" width="12" height="12" viewBox="0 0 12 12"><path d="M1.5 6.2l2.8 3.3L10.3 2" fill="none" stroke="#8a3516" stroke-width="2.3" stroke-linecap="round" stroke-linejoin="round"/></svg></div>
<label class="t" style="left:859.00px;top:185px;line-height:17px;height:17px;font-size:15.5px;letter-spacing:-1.458px;">CBS</label>
<div class="chk on" role="checkbox" aria-checked="true" style="left:939px;top:184px"><svg style="left:2px;top:2px" width="12" height="12" viewBox="0 0 12 12"><path d="M1.5 6.2l2.8 3.3L10.3 2" fill="none" stroke="#8a3516" stroke-width="2.3" stroke-linecap="round" stroke-linejoin="round"/></svg></div>
<label class="t" style="left:962.00px;top:185px;line-height:17px;height:17px;font-size:15.5px;letter-spacing:-0.375px;">IBS Est.</label>
<div class="chk off" role="checkbox" aria-checked="false" style="left:1041px;top:184px"></div>
<label class="t" style="left:1064.50px;top:185px;line-height:17px;height:17px;font-size:15.5px;letter-spacing:-0.219px;">IBS Mun.</label>
<div class="inp" style="left:603px;top:204px;width:90.5px;height:27px">
<span class="t" style="left:2.00px;top:3px;line-height:17px;height:17px;font-size:15.5px;letter-spacing:0.571px;width:64px;overflow:hidden;">000 - Tri</span>
</div>
<div class="inp" style="left:709px;top:204px;width:111.5px;height:27px">
<span class="t" style="left:2.50px;top:3px;line-height:17px;height:17px;font-size:15.5px;letter-spacing:0.201px;width:85px;overflow:hidden;">000001 - Sit</span>
</div>
<div class="inp" style="left:836px;top:204px;width:87.5px;height:27px">
<span class="t" style="left:2.00px;top:3px;line-height:17px;height:17px;font-size:15.5px;letter-spacing:0.146px;">0,9</span>
</div>
<div class="inp" style="left:939px;top:204px;width:86.5px;height:27px">
<span class="t" style="left:1.50px;top:3px;line-height:17px;height:17px;font-size:15.5px;letter-spacing:0.146px;">0,1</span>
</div>
<div class="inp" style="left:1041px;top:204px;width:87.5px;height:27px">
</div>
<div class="spin" style="left:671.5px;top:205px;width:21px;height:25px"><svg style="left:4px;top:5px" width="11" height="15" viewBox="0 0 11 15"><path d="M1.5 5.8L5.5 1.8l4 4z" fill="#3a6ea5"/><path d="M1.5 9.2l4 4 4-4z" fill="#3a6ea5"/></svg></div>
<div class="spin" style="left:798.5px;top:205px;width:21px;height:25px"><svg style="left:4px;top:5px" width="11" height="15" viewBox="0 0 11 15"><path d="M1.5 5.8L5.5 1.8l4 4z" fill="#3a6ea5"/><path d="M1.5 9.2l4 4 4-4z" fill="#3a6ea5"/></svg></div>
<div class="btn" role="button" style="left:1141px;top:201px;width:123px;height:32.5px">
<svg style="left:17px;top:7px" width="19" height="19" viewBox="0 0 19 19"><circle cx="9.5" cy="9.5" r="8.5" fill="#e9e9e9" stroke="#8b8b8b"/><circle cx="9.5" cy="9.5" r="6.3" fill="#4fb24a" stroke="#2f8a2f"/><path d="M8 5.5h3v4h2.6L9.5 13.6 5.4 9.5H8z" fill="#fff"/></svg>
<span class="t" style="left:42.00px;top:8px;line-height:17px;height:17px;font-size:15.5px;letter-spacing:0.188px;">Atualizar</span>
</div>
<div id="grid" role="grid" style="left:15px;top:251px;">
<div class="gh" style="left:0px;top:0;width:15px"></div>
<div class="gh" style="left:15px;top:0;width:69.5px"></div>
<div class="gh" style="left:84.5px;top:0;width:338.5px"></div>
<div class="gh" style="left:423px;top:0;width:165px"></div>
<div class="gh" style="left:588px;top:0;width:94.5px"></div>
<div class="gh" style="left:682.5px;top:0;width:64.0px"></div>
<div class="gh" style="left:746.5px;top:0;width:101.0px"></div>
<div class="gh" style="left:847.5px;top:0;width:126.5px"></div>
<div class="gh" style="left:974px;top:0;width:107.5px"></div>
<div class="gh" style="left:1081.5px;top:0;width:107.5px"></div>
<div class="gh" style="left:1189px;top:0;width:100px"></div>
<div class="ind" style="left:0;top:27px"></div>
<div class="hl" style="left:15px;top:52px"></div><div class="hi" style="left:0;top:52px"></div>
<div class="hl" style="left:15px;top:78px"></div><div class="hi" style="left:0;top:78px"></div>
<div class="hl" style="left:15px;top:104px"></div><div class="hi" style="left:0;top:104px"></div>
<div class="hl" style="left:15px;top:131px"></div><div class="hi" style="left:0;top:131px"></div>
<div class="hl" style="left:15px;top:157px"></div><div class="hi" style="left:0;top:157px"></div>
<div class="hl" style="left:15px;top:183px"></div><div class="hi" style="left:0;top:183px"></div>
<div class="hl" style="left:15px;top:209px"></div><div class="hi" style="left:0;top:209px"></div>
<div class="hl" style="left:15px;top:236px"></div><div class="hi" style="left:0;top:236px"></div>
<div class="hl" style="left:15px;top:262px"></div><div class="hi" style="left:0;top:262px"></div>
<div class="hl" style="left:15px;top:288px"></div><div class="hi" style="left:0;top:288px"></div>
<div class="hl" style="left:15px;top:314px"></div><div class="hi" style="left:0;top:314px"></div>
<div class="hl" style="left:15px;top:341px"></div><div class="hi" style="left:0;top:341px"></div>
<div class="hl" style="left:15px;top:367px"></div><div class="hi" style="left:0;top:367px"></div>
<div class="hl" style="left:15px;top:393px"></div><div class="hi" style="left:0;top:393px"></div>
<div class="hl" style="left:15px;top:419px"></div><div class="hi" style="left:0;top:419px"></div>
<div class="hl" style="left:15px;top:445px"></div><div class="hi" style="left:0;top:445px"></div>
<div class="vl" style="left:83.5px;top:27px"></div>
<div class="vl" style="left:422px;top:27px"></div>
<div class="vl" style="left:587px;top:27px"></div>
<div class="vl" style="left:681.5px;top:27px"></div>
<div class="vl" style="left:745.5px;top:27px"></div>
<div class="vl" style="left:846.5px;top:27px"></div>
<div class="vl" style="left:973px;top:27px"></div>
<div class="vl" style="left:1080.5px;top:27px"></div>
<div class="vl" style="left:1188px;top:27px"></div>
<div class="vl" style="left:1288px;top:27px"></div>
<div class="w" role="row">
<span class="t" role="columnheader" style="left:25.50px;top:5px;line-height:17px;height:17px;font-size:15.5px;letter-spacing:-0.188px;">Código</span>
<span class="t" role="columnheader" style="left:88.00px;top:5px;line-height:17px;height:17px;font-size:15.5px;letter-spacing:-0.047px;">Descrição</span>
<span class="t" role="columnheader" style="left:446.00px;top:5px;line-height:17px;height:17px;font-size:15.5px;letter-spacing:-0.219px;">Grupo</span>
<span class="t" role="columnheader" style="left:618.00px;top:5px;line-height:17px;height:17px;font-size:15.5px;letter-spacing:-1.438px;">NCM</span>
<span class="t" role="columnheader" style="left:695.00px;top:5px;line-height:17px;height:17px;font-size:15.5px;letter-spacing:-1.266px;">CFOP</span>
<span class="t" role="columnheader" style="left:782.50px;top:5px;line-height:17px;height:17px;font-size:15.5px;letter-spacing:-0.667px;">CST</span>
<span class="t" role="columnheader" style="left:870.50px;top:5px;line-height:17px;height:17px;font-size:15.5px;letter-spacing:0.207px;">Class. Trib.</span>
<span class="t" role="columnheader" style="left:1013.25px;top:5px;line-height:17px;height:17px;font-size:15.5px;letter-spacing:-1.458px;">CBS</span>
<span class="t" role="columnheader" style="left:1107.00px;top:5px;line-height:17px;height:17px;font-size:15.5px;letter-spacing:-0.250px;">IBS Est.</span>
<span class="t" role="columnheader" style="left:1206.50px;top:5px;line-height:17px;height:17px;font-size:15.5px;letter-spacing:-0.094px;">IBS Mun.</span>
</div>
<div class="w" role="row">
<span class="t" role="gridcell" style="left:29.00px;top:31px;line-height:18px;height:18px;font-size:16.5px;font-weight:700;letter-spacing:0.695px;-webkit-text-stroke:.3px #000;">0001</span>
<span class="t" role="gridcell" style="left:89.30px;top:32px;line-height:17px;height:17px;font-size:15.5px;letter-spacing:-0.607px;">ÁGUA MINERAL</span>
<span class="t" role="gridcell" style="left:428.00px;top:32px;line-height:17px;height:17px;font-size:15.5px;letter-spacing:-0.743px;">BEBIDAS</span>
<span class="t" role="gridcell" style="left:599.00px;top:32px;line-height:17px;height:17px;font-size:15.5px;letter-spacing:0.211px;">22011000</span>
<span class="t" role="gridcell" style="left:696.70px;top:32px;line-height:17px;height:17px;font-size:15.5px;">5405</span>
</div>
<div class="w" role="row">
<span class="t" role="gridcell" style="left:29.00px;top:57px;line-height:18px;height:18px;font-size:16.5px;font-weight:700;letter-spacing:0.695px;-webkit-text-stroke:.3px #000;">0002</span>
<span class="t" role="gridcell" style="left:89.30px;top:58px;line-height:17px;height:17px;font-size:15.5px;letter-spacing:-0.961px;">CAFÉ</span>
<span class="t" role="gridcell" style="left:428.00px;top:58px;line-height:17px;height:17px;font-size:15.5px;letter-spacing:-0.743px;">BEBIDAS</span>
<span class="t" role="gridcell" style="left:599.00px;top:58px;line-height:17px;height:17px;font-size:15.5px;letter-spacing:0.066px;">09012100</span>
<span class="t" role="gridcell" style="left:696.70px;top:58px;line-height:17px;height:17px;font-size:15.5px;">5102</span>
</div>
<div class="w" role="row">
<span class="t" role="gridcell" style="left:29.00px;top:83px;line-height:18px;height:18px;font-size:16.5px;font-weight:700;letter-spacing:0.695px;-webkit-text-stroke:.3px #000;">0003</span>
<span class="t" role="gridcell" style="left:89.30px;top:84px;line-height:17px;height:17px;font-size:15.5px;letter-spacing:-0.953px;">REFRIGERANTE</span>
<span class="t" role="gridcell" style="left:428.00px;top:84px;line-height:17px;height:17px;font-size:15.5px;letter-spacing:-0.743px;">BEBIDAS</span>
<span class="t" role="gridcell" style="left:599.00px;top:84px;line-height:17px;height:17px;font-size:15.5px;letter-spacing:0.066px;">22021000</span>
<span class="t" role="gridcell" style="left:696.70px;top:84px;line-height:17px;height:17px;font-size:15.5px;">5405</span>
</div>
<div class="w" role="row">
<span class="t" role="gridcell" style="left:29.00px;top:109px;line-height:18px;height:18px;font-size:16.5px;font-weight:700;letter-spacing:0.695px;-webkit-text-stroke:.3px #000;">0004</span>
<span class="t" role="gridcell" style="left:89.30px;top:110px;line-height:17px;height:17px;font-size:15.5px;letter-spacing:-0.566px;">SUCO NATURAL</span>
<span class="t" role="gridcell" style="left:428.00px;top:110px;line-height:17px;height:17px;font-size:15.5px;letter-spacing:-0.743px;">BEBIDAS</span>
<span class="t" role="gridcell" style="left:599.00px;top:110px;line-height:17px;height:17px;font-size:15.5px;letter-spacing:0.066px;">20098990</span>
<span class="t" role="gridcell" style="left:696.70px;top:110px;line-height:17px;height:17px;font-size:15.5px;">5102</span>
</div>
<div class="w" role="row">
<span class="t" role="gridcell" style="left:29.00px;top:136px;line-height:18px;height:18px;font-size:16.5px;font-weight:700;letter-spacing:0.695px;-webkit-text-stroke:.3px #000;">0005</span>
<span class="t" role="gridcell" style="left:89.30px;top:137px;line-height:17px;height:17px;font-size:15.5px;letter-spacing:-1.103px;">CERVEJA</span>
<span class="t" role="gridcell" style="left:428.00px;top:137px;line-height:17px;height:17px;font-size:15.5px;letter-spacing:-0.743px;">BEBIDAS</span>
<span class="t" role="gridcell" style="left:599.00px;top:137px;line-height:17px;height:17px;font-size:15.5px;letter-spacing:0.066px;">22030000</span>
<span class="t" role="gridcell" style="left:696.70px;top:137px;line-height:17px;height:17px;font-size:15.5px;">5405</span>
</div>
<div class="w" role="row">
<span class="t" role="gridcell" style="left:29.00px;top:162px;line-height:18px;height:18px;font-size:16.5px;font-weight:700;letter-spacing:0.695px;-webkit-text-stroke:.3px #000;">0006</span>
<span class="t" role="gridcell" style="left:89.30px;top:163px;line-height:17px;height:17px;font-size:15.5px;letter-spacing:-0.212px;">VINHO TINTO</span>
<span class="t" role="gridcell" style="left:428.00px;top:163px;line-height:17px;height:17px;font-size:15.5px;letter-spacing:-0.743px;">BEBIDAS</span>
<span class="t" role="gridcell" style="left:599.00px;top:163px;line-height:17px;height:17px;font-size:15.5px;letter-spacing:0.066px;">22042100</span>
<span class="t" role="gridcell" style="left:696.70px;top:163px;line-height:17px;height:17px;font-size:15.5px;">5405</span>
</div>
<div class="w" role="row">
<span class="t" role="gridcell" style="left:29.00px;top:188px;line-height:18px;height:18px;font-size:16.5px;font-weight:700;letter-spacing:0.695px;-webkit-text-stroke:.3px #000;">0007</span>
<span class="t" role="gridcell" style="left:89.30px;top:189px;line-height:17px;height:17px;font-size:15.5px;letter-spacing:-0.661px;">FILÉ MIGNON</span>
<span class="t" role="gridcell" style="left:428.00px;top:189px;line-height:17px;height:17px;font-size:15.5px;letter-spacing:-0.615px;">RESTAURANTE</span>
<span class="t" role="gridcell" style="left:599.00px;top:189px;line-height:17px;height:17px;font-size:15.5px;letter-spacing:0.066px;">21069090</span>
<span class="t" role="gridcell" style="left:696.70px;top:189px;line-height:17px;height:17px;font-size:15.5px;">5102</span>
</div>
<div class="w" role="row">
<span class="t" role="gridcell" style="left:29.00px;top:214px;line-height:18px;height:18px;font-size:16.5px;font-weight:700;letter-spacing:0.695px;-webkit-text-stroke:.3px #000;">0008</span>
<span class="t" role="gridcell" style="left:89.30px;top:215px;line-height:17px;height:17px;font-size:15.5px;letter-spacing:-0.827px;">SALMÃO GRELHADO</span>
<span class="t" role="gridcell" style="left:428.00px;top:215px;line-height:17px;height:17px;font-size:15.5px;letter-spacing:-0.615px;">RESTAURANTE</span>
<span class="t" role="gridcell" style="left:599.00px;top:215px;line-height:17px;height:17px;font-size:15.5px;letter-spacing:0.066px;">21069090</span>
<span class="t" role="gridcell" style="left:696.70px;top:215px;line-height:17px;height:17px;font-size:15.5px;">5102</span>
</div>
<div class="w" role="row">
<span class="t" role="gridcell" style="left:29.00px;top:241px;line-height:18px;height:18px;font-size:16.5px;font-weight:700;letter-spacing:0.695px;-webkit-text-stroke:.3px #000;">0009</span>
<span class="t" role="gridcell" style="left:89.30px;top:242px;line-height:17px;height:17px;font-size:15.5px;letter-spacing:-0.678px;">REFEIÇÃO SELF-SERVICE</span>
<span class="t" role="gridcell" style="left:428.00px;top:242px;line-height:17px;height:17px;font-size:15.5px;letter-spacing:-0.615px;">RESTAURANTE</span>
<span class="t" role="gridcell" style="left:599.00px;top:242px;line-height:17px;height:17px;font-size:15.5px;letter-spacing:0.066px;">21069090</span>
<span class="t" role="gridcell" style="left:696.70px;top:242px;line-height:17px;height:17px;font-size:15.5px;">5102</span>
</div>
<div class="w" role="row">
<span class="t" role="gridcell" style="left:29.00px;top:267px;line-height:18px;height:18px;font-size:16.5px;font-weight:700;letter-spacing:0.695px;-webkit-text-stroke:.3px #000;">0010</span>
<span class="t" role="gridcell" style="left:89.30px;top:268px;line-height:17px;height:17px;font-size:15.5px;letter-spacing:-0.458px;">PORÇÃO FRITAS</span>
<span class="t" role="gridcell" style="left:428.00px;top:268px;line-height:17px;height:17px;font-size:15.5px;letter-spacing:-0.615px;">RESTAURANTE</span>
<span class="t" role="gridcell" style="left:599.00px;top:268px;line-height:17px;height:17px;font-size:15.5px;letter-spacing:0.066px;">21069090</span>
<span class="t" role="gridcell" style="left:696.70px;top:268px;line-height:17px;height:17px;font-size:15.5px;">5102</span>
</div>
<div class="w" role="row">
<span class="t" role="gridcell" style="left:29.00px;top:293px;line-height:18px;height:18px;font-size:16.5px;font-weight:700;letter-spacing:0.926px;-webkit-text-stroke:.3px #000;">0011</span>
<span class="t" role="gridcell" style="left:89.30px;top:294px;line-height:17px;height:17px;font-size:15.5px;letter-spacing:-0.772px;">PICANHA</span>
<span class="t" role="gridcell" style="left:428.00px;top:294px;line-height:17px;height:17px;font-size:15.5px;letter-spacing:-0.615px;">RESTAURANTE</span>
<span class="t" role="gridcell" style="left:599.00px;top:294px;line-height:17px;height:17px;font-size:15.5px;letter-spacing:0.066px;">21069090</span>
<span class="t" role="gridcell" style="left:696.70px;top:294px;line-height:17px;height:17px;font-size:15.5px;">5102</span>
</div>
<div class="w" role="row">
<span class="t" role="gridcell" style="left:29.00px;top:319px;line-height:18px;height:18px;font-size:16.5px;font-weight:700;letter-spacing:0.695px;-webkit-text-stroke:.3px #000;">0012</span>
<span class="t" role="gridcell" style="left:89.30px;top:320px;line-height:17px;height:17px;font-size:15.5px;letter-spacing:-0.695px;">SALADA</span>
<span class="t" role="gridcell" style="left:428.00px;top:320px;line-height:17px;height:17px;font-size:15.5px;letter-spacing:-0.615px;">RESTAURANTE</span>
<span class="t" role="gridcell" style="left:599.00px;top:320px;line-height:17px;height:17px;font-size:15.5px;letter-spacing:0.066px;">21069090</span>
<span class="t" role="gridcell" style="left:696.70px;top:320px;line-height:17px;height:17px;font-size:15.5px;">5102</span>
</div>
<div class="w" role="row">
<span class="t" role="gridcell" style="left:29.00px;top:346px;line-height:18px;height:18px;font-size:16.5px;font-weight:700;letter-spacing:0.695px;-webkit-text-stroke:.3px #000;">0013</span>
<span class="t" role="gridcell" style="left:89.30px;top:347px;line-height:17px;height:17px;font-size:15.5px;letter-spacing:-0.757px;">CHOCOLATE</span>
<span class="t" role="gridcell" style="left:428.00px;top:347px;line-height:17px;height:17px;font-size:15.5px;letter-spacing:-1.008px;">BOMBONIERE</span>
<span class="t" role="gridcell" style="left:599.00px;top:347px;line-height:17px;height:17px;font-size:15.5px;letter-spacing:0.211px;">18063110</span>
<span class="t" role="gridcell" style="left:696.70px;top:347px;line-height:17px;height:17px;font-size:15.5px;">5102</span>
</div>
<div class="w" role="row">
<span class="t" role="gridcell" style="left:29.00px;top:372px;line-height:18px;height:18px;font-size:16.5px;font-weight:700;letter-spacing:0.695px;-webkit-text-stroke:.3px #000;">0014</span>
<span class="t" role="gridcell" style="left:89.30px;top:373px;line-height:17px;height:17px;font-size:15.5px;letter-spacing:-0.938px;">BOMBOM</span>
<span class="t" role="gridcell" style="left:428.00px;top:373px;line-height:17px;height:17px;font-size:15.5px;letter-spacing:-1.008px;">BOMBONIERE</span>
<span class="t" role="gridcell" style="left:599.00px;top:373px;line-height:17px;height:17px;font-size:15.5px;letter-spacing:0.211px;">18063110</span>
<span class="t" role="gridcell" style="left:696.70px;top:373px;line-height:17px;height:17px;font-size:15.5px;">5102</span>
</div>
<div class="w" role="row">
<span class="t" role="gridcell" style="left:29.00px;top:398px;line-height:18px;height:18px;font-size:16.5px;font-weight:700;letter-spacing:0.695px;-webkit-text-stroke:.3px #000;">0015</span>
<span class="t" role="gridcell" style="left:89.30px;top:399px;line-height:17px;height:17px;font-size:15.5px;letter-spacing:-0.910px;">BALA</span>
<span class="t" role="gridcell" style="left:428.00px;top:399px;line-height:17px;height:17px;font-size:15.5px;letter-spacing:-1.008px;">BOMBONIERE</span>
<span class="t" role="gridcell" style="left:599.00px;top:399px;line-height:17px;height:17px;font-size:15.5px;letter-spacing:0.066px;">17049020</span>
<span class="t" role="gridcell" style="left:696.70px;top:399px;line-height:17px;height:17px;font-size:15.5px;">5102</span>
</div>
<div class="w" role="row">
<span class="t" role="gridcell" style="left:29.00px;top:424px;line-height:18px;height:18px;font-size:16.5px;font-weight:700;letter-spacing:0.695px;-webkit-text-stroke:.3px #000;">0016</span>
<span class="t" role="gridcell" style="left:89.30px;top:425px;line-height:17px;height:17px;font-size:15.5px;letter-spacing:-0.832px;">CHICLETE</span>
<span class="t" role="gridcell" style="left:428.00px;top:425px;line-height:17px;height:17px;font-size:15.5px;letter-spacing:-1.008px;">BOMBONIERE</span>
<span class="t" role="gridcell" style="left:599.00px;top:425px;line-height:17px;height:17px;font-size:15.5px;letter-spacing:0.066px;">17041000</span>
<span class="t" role="gridcell" style="left:696.70px;top:425px;line-height:17px;height:17px;font-size:15.5px;">5102</span>
</div>
<svg style="left:4.5px;top:33px" width="8" height="13" viewBox="0 0 8 13"><path d="M.8 .8v11.4L6.6 6.5z" fill="#16294a"/></svg>
<div class="sbtrack" role="scrollbar" style="left:1311px;top:0px;">
<div class="btn sbb" style="left:1px;top:2px;width:20px;height:19px"></div>
<div class="btn sbt" style="left:1px;top:23px;width:20px;height:34px"></div>
<div class="btn sbb" style="left:1px;top:430px;width:20px;height:19px"></div>
<svg style="left:6px;top:8px" width="10" height="6" viewBox="0 0 10 6"><path d="M1 5.5l4-4 4 4z" fill="#3a6ea5"/></svg>
<svg style="left:6px;top:437px" width="10" height="6" viewBox="0 0 10 6"><path d="M1 .5l4 4 4-4z" fill="#3a6ea5"/></svg>
<svg style="left:7px;top:37px" width="8" height="6" viewBox="0 0 8 6"><path d="M0 1h8M0 4.5h8" stroke="#9db9d2" stroke-width="1.2"/></svg>
</div>
</div>
</div>
<span class="t" style="left:1084.00px;top:716px;line-height:17px;height:17px;font-size:15.5px;color:#44688f;letter-spacing:0.307px;">Total em Exibição:</span>
<span class="t" style="left:1265.70px;top:716px;line-height:17px;height:17px;font-size:15.5px;font-weight:700;color:#2d4f7c;letter-spacing:1.042px;">157</span>
<div class="rule" style="left:9px;top:740px;width:1347px"></div>
<div class="btn" role="button" style="left:1038px;top:750px;width:147px;height:41px">
<svg style="left:37px;top:14.5px" width="18" height="15" viewBox="0 0 18 15"><path d="M1.2 8.2l3-2.2 2.6 3.2L15.4 1l1.6 1.5L7 14z" fill="#35a524" stroke="#1f7d14" stroke-width="1" stroke-linejoin="round"/></svg>
<span class="t" style="left:61.30px;top:12px;line-height:17px;height:17px;font-size:15.5px;letter-spacing:-0.146px;"><u>G</u>ravar</span>
</div>
<div class="btn" role="button" style="left:1194px;top:750px;width:147px;height:41px">
<svg style="left:31px;top:12px" width="16" height="16" viewBox="0 0 16 16"><path d="M2 2.2l11.8 11.6M13.8 2.2L2 13.8" stroke="#dd130c" stroke-width="4" stroke-linecap="round"/></svg>
<span class="t" style="left:54.00px;top:12px;line-height:17px;height:17px;font-size:15.5px;letter-spacing:-0.066px;"><u>C</u>ancelar</span>
</div>
</section>
<div id="dlg" role="alertdialog" aria-label="Atualizar" style="left:693px;top:269px;">
<div id="dlgtitle"></div><div id="dlgbody"></div>
<div id="dlgfoot" style="left:9px;top:189px;width:514px;height:58px"></div>
<h2 class="t" style="left:9.00px;top:9px;line-height:16px;height:16px;font-size:14px;font-weight:700;color:#fff;letter-spacing:0.486px;text-shadow:0 1px 1px rgba(0,0,0,.45);">Atualizar</h2>
<svg style="left:505px;top:10px" width="15" height="14" viewBox="0 0 15 14"><path d="M1.8 1.8l11.4 10.8M13.2 1.8L1.8 12.6" stroke="#a9c8e2" stroke-width="2.6"/></svg>
<svg style="left:30px;top:55px" width="62" height="62" viewBox="0 0 62 62">
<defs><linearGradient id="qg" x1="0.15" y1="0" x2="0.75" y2="1"><stop offset="0" stop-color="#5a86e6"/><stop offset=".3" stop-color="#2a56c0"/><stop offset=".55" stop-color="#0f369a"/><stop offset=".8" stop-color="#2346b4"/><stop offset="1" stop-color="#4a68dc"/></linearGradient>
<linearGradient id="qr" x1="0" y1="0" x2="0" y2="1"><stop offset="0" stop-color="#fdfdfd"/><stop offset=".6" stop-color="#e4e4e4"/><stop offset="1" stop-color="#a8a8a8"/></linearGradient>
<linearGradient id="qq" x1="0" y1="0" x2="0" y2="1"><stop offset="0" stop-color="#ffffff"/><stop offset="1" stop-color="#d4d8e4"/></linearGradient></defs>
<circle cx="31" cy="31.6" r="28.6" fill="#000" opacity=".12"/>
<circle cx="30.8" cy="30.9" r="28" fill="url(#qr)" stroke="#8f8f8f" stroke-width=".9"/>
<circle cx="30.8" cy="30.9" r="25.2" fill="url(#qg)" stroke="#0a2a7a" stroke-width=".6"/>
<path d="M7.5 24c6-14 24-20 38-9-14-3-30 0-38 9z" fill="#fff" opacity=".13"/>
<g transform="translate(31.6 0) scale(.74 1)"><text x="0" y="49.6" text-anchor="middle" font-family="Liberation Sans, sans-serif" font-weight="700" font-size="51.5" fill="url(#qq)">?</text></g>
</svg>
<p class="t" style="left:116.50px;top:60px;line-height:17px;height:17px;font-size:15.5px;color:#44688f;letter-spacing:0.016px;">Atenção</p>
<p class="t" style="left:116.50px;top:100px;line-height:17px;height:17px;font-size:15.5px;color:#44688f;letter-spacing:0.198px;">Essa operação atualizará todos os itens em exibição.</p>
<p class="t" style="left:116.50px;top:120px;line-height:17px;height:17px;font-size:15.5px;color:#44688f;letter-spacing:0.216px;">Deseja realmente continuar?</p>
<div class="btnhot" role="button" style="left:210px;top:196px;width:147px;height:41px">
<svg style="left:47px;top:14.5px" width="18" height="15" viewBox="0 0 18 15"><path d="M1.2 8.2l3-2.2 2.6 3.2L15.4 1l1.6 1.5L7 14z" fill="#35a524" stroke="#1f7d14" stroke-width="1" stroke-linejoin="round"/></svg>
<span class="t" style="left:71.70px;top:12px;line-height:17px;height:17px;font-size:15.5px;letter-spacing:0.099px;"><u>S</u>im</span>
</div>
<div class="btn" role="button" style="left:366px;top:196px;width:147px;height:41px">
<svg style="left:48px;top:12px" width="16" height="16" viewBox="0 0 16 16"><path d="M2 2.2l11.8 11.6M13.8 2.2L2 13.8" stroke="#dd130c" stroke-width="4" stroke-linecap="round"/></svg>
<span class="t" style="left:71.50px;top:12px;line-height:17px;height:17px;font-size:15.5px;letter-spacing:-0.479px;"><u>N</u>ão</span>
</div>
<div id="focus" style="left:202px;top:189px;width:162px;height:55px"></div>
</div>
</main>
<footer id="status">
<div class="sep" style="left:148px;top:2.5px"></div>
<div class="sep" style="left:587px;top:2.5px"></div>
<div class="sep" style="left:836px;top:2.5px"></div>
<div class="sep" style="left:1130px;top:2.5px"></div>
<div class="sep" style="left:1745px;top:2.5px"></div>
<span class="t" style="left:4.50px;top:5px;line-height:17px;height:17px;font-size:15.5px;color:#44688f;letter-spacing:0.308px;">Versão: 2026.01.08</span>
<span class="t" style="left:152.00px;top:5px;line-height:17px;height:17px;font-size:15.5px;color:#44688f;letter-spacing:0.425px;">localhost/3050:C:</span>
<span class="t" style="left:279.00px;top:5px;line-height:17px;height:17px;font-size:15.5px;color:#44688f;letter-spacing:-0.222px;">\Datacaixa2026\BD\BANCO.FDB</span>
<span class="t" style="left:650.50px;top:5px;line-height:17px;height:17px;font-size:15.5px;color:#44688f;letter-spacing:0.276px;">Usuário: carolina</span>
<span class="t" style="left:875.70px;top:6px;line-height:15px;height:15px;font-size:13.3px;color:#f01d24;letter-spacing:0.158px;">Validade do Certificado: 10/01/2026</span>
<span class="t" style="left:1221.30px;top:5px;line-height:17px;height:17px;font-size:15.5px;color:#44688f;letter-spacing:0.533px;">Suporte: </span>
<span class="t" style="left:1289.00px;top:5px;line-height:17px;height:17px;font-size:15.5px;color:#44688f;letter-spacing:-0.243px;">DATACAIXA TECNOLOGIA </span>
<span class="t" style="left:1477.70px;top:5px;line-height:17px;height:17px;font-size:15.5px;color:#44688f;letter-spacing:0.365px;">Celular: </span>
<span class="t" style="left:1538.70px;top:5px;line-height:17px;height:17px;font-size:15.5px;color:#44688f;letter-spacing:0.331px;">(11)98620-5451</span>
<svg style="left:1754px;top:5px" width="24" height="17" viewBox="0 0 24 17" fill="none"><path d="M16 13H6.5a4.5 4.5 0 0 1-.6-8.96A6 6 0 0 1 17.3 5.2" stroke="#d9232b" stroke-width="2" stroke-linecap="round"/><path d="M15 8l6 6M21 8l-6 6" stroke="#d9232b" stroke-width="2.2"/></svg>
<span class="t" style="left:1780.50px;top:5px;line-height:17px;height:17px;font-size:15.5px;color:#44688f;letter-spacing:-0.217px;">Backup Nuvem</span>
</footer>
</body>
</html>
